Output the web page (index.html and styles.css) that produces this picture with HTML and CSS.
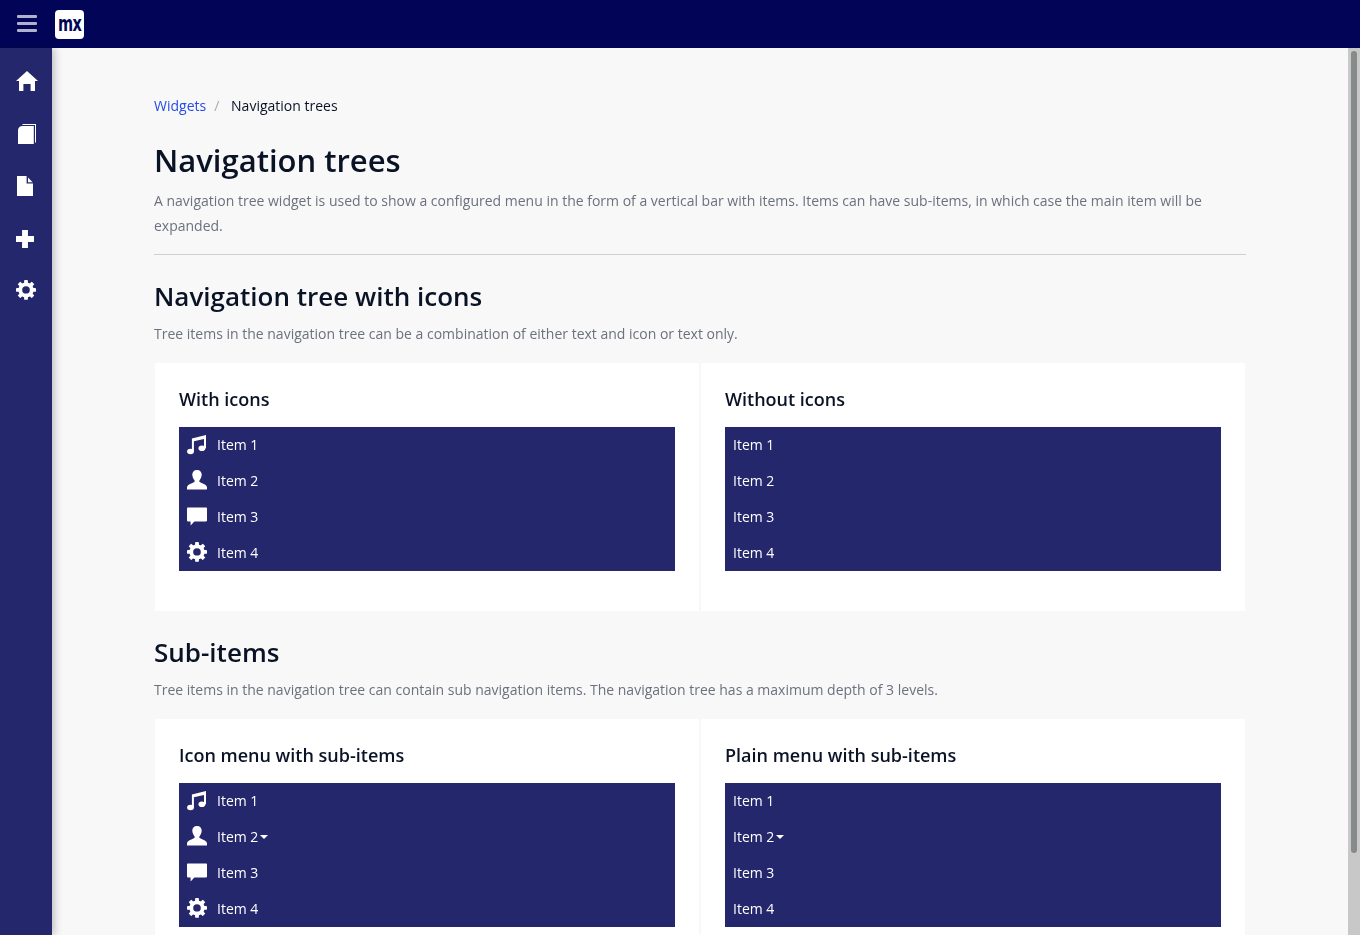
FILE: index.html
```html
<!DOCTYPE html>
<html lang="en">
<head>
    <meta charset="UTF-8">
    <title>Navigation trees</title>
    <link rel="stylesheet" href="styles.css">
</head>
<body>
    <svg class="defs" width="0" height="0">
        <symbol id="i-music" viewBox="0 0 20 20">
            <g transform="translate(0 -0.5)">
                <ellipse cx="3.5" cy="17" rx="3.4" ry="2.8"/>
                <ellipse cx="14.9" cy="13.8" rx="3.4" ry="2.8"/>
                <path d="M4.9 17 L4.9 4 L19 0.5 L19 13.8 L17 13.8 L17 4.4 L6.9 6.8 L6.9 17 Z"/>
            </g>
        </symbol>
        <symbol id="i-user" viewBox="0 0 20 20"><path d="M10 0 C13.2 0 14.8 2.1 14.7 4.8 C14.6 7 13.7 9 12.6 10.2 C12.1 10.8 12.2 11.6 12.8 12.1 C14.8 13.6 19.2 14.2 20 17.2 L20 19.6 L0 19.6 L0 17.2 C0.8 14.2 5.2 13.6 7.2 12.1 C7.8 11.6 7.9 10.8 7.4 10.2 C6.3 9 5.4 7 5.3 4.8 C5.2 2.1 6.8 0 10 0 Z"/></symbol>
        <symbol id="i-comment" viewBox="0 0 20 20"><path d="M0.8 0.6 L19.2 0.6 C19.7 0.6 20 0.9 20 1.4 L20 13.6 C20 14.1 19.7 14.4 19.2 14.4 L7.4 14.4 L3.6 18.6 L3.6 14.4 L0.8 14.4 C0.3 14.4 0 14.1 0 13.6 L0 1.4 C0 0.9 0.3 0.6 0.8 0.6 Z"/></symbol>
        <symbol id="i-cog" viewBox="0 0 20 20">
            <g transform="translate(0 -1.9) scale(1 0.98)">
                <circle cx="10" cy="11" r="5.7" fill="none" stroke="#fff" stroke-width="3.8"/>
                <rect x="8.1" y="1" width="3.8" height="4" rx="0.5"/>
                <rect x="8.1" y="1" width="3.8" height="4" rx="0.5" transform="rotate(45 10 11)"/>
                <rect x="8.1" y="1" width="3.8" height="4" rx="0.5" transform="rotate(90 10 11)"/>
                <rect x="8.1" y="1" width="3.8" height="4" rx="0.5" transform="rotate(135 10 11)"/>
                <rect x="8.1" y="1" width="3.8" height="4" rx="0.5" transform="rotate(180 10 11)"/>
                <rect x="8.1" y="1" width="3.8" height="4" rx="0.5" transform="rotate(225 10 11)"/>
                <rect x="8.1" y="1" width="3.8" height="4" rx="0.5" transform="rotate(270 10 11)"/>
                <rect x="8.1" y="1" width="3.8" height="4" rx="0.5" transform="rotate(315 10 11)"/>
            </g>
        </symbol>
    </svg>

    <div class="topbar">
        <div class="hamburger"><span></span><span></span><span></span></div>
        <div class="logo"><span>mx</span></div>
    </div>

    <div class="layout">
        <div class="sidebar">
            <svg class="side-icon" viewBox="0 0 22 20"><path d="M11 0 L22 10 L19 10 L19 20 L14.6 20 L14.6 13 L7.4 13 L7.4 20 L3 20 L3 10 L0 10 Z"/></svg>
            <svg class="side-icon side-book" viewBox="0 0 20 20"><path d="M6 0 L19 0 L19 18.4 L18 18.4 L18 1 L5 1 Z"/><path d="M5 2 L16.8 2 L16.8 20 L1 20 L1 6 C1 4 3 2 5 2 Z"/></svg>
            <svg class="side-icon side-file" viewBox="0 0 16 20"><path d="M0 0 L9.6 0 L9.6 7.6 L16 7.6 L16 20 L0 20 Z"/><path d="M11 1.6 L15.6 6.2 L11 6.2 Z"/></svg>
            <svg class="side-icon side-plus" viewBox="0 0 19 19"><path d="M6.4 0 L12.6 0 L12.6 6.4 L19 6.4 L19 12.6 L12.6 12.6 L12.6 19 L6.4 19 L6.4 12.6 L0 12.6 L0 6.4 L6.4 6.4 Z"/></svg>
            <svg class="side-icon side-cog"><use href="#i-cog"/></svg>
        </div>

        <div class="main">
            <div class="breadcrumb">
                <a href="#">Widgets</a>
                <span class="sep">/</span>
                <span>Navigation trees</span>
            </div>
            <h1>Navigation trees</h1>
            <p class="lead">A navigation tree widget is used to show a configured menu in the form of a vertical bar with items. Items can have sub-items, in which case the main item will be expanded.</p>
            <hr>

            <h2>Navigation tree with icons</h2>
            <p class="intro">Tree items in the navigation tree can be a combination of either text and icon or text only.</p>
            <div class="cards">
                <div class="card">
                    <h3>With icons</h3>
                    <ul class="tree">
                        <li><svg><use href="#i-music"/></svg>Item 1</li>
                        <li><svg><use href="#i-user"/></svg>Item 2</li>
                        <li><svg><use href="#i-comment"/></svg>Item 3</li>
                        <li><svg><use href="#i-cog"/></svg>Item 4</li>
                    </ul>
                </div>
                <div class="card">
                    <h3>Without icons</h3>
                    <ul class="tree">
                        <li>Item 1</li>
                        <li>Item 2</li>
                        <li>Item 3</li>
                        <li>Item 4</li>
                    </ul>
                </div>
            </div>

            <h2>Sub-items</h2>
            <p class="intro">Tree items in the navigation tree can contain sub navigation items. The navigation tree has a maximum depth of 3 levels.</p>
            <div class="cards">
                <div class="card">
                    <h3>Icon menu with sub-items</h3>
                    <ul class="tree">
                        <li><svg><use href="#i-music"/></svg>Item 1</li>
                        <li><svg><use href="#i-user"/></svg>Item 2<span class="caret"></span></li>
                        <li><svg><use href="#i-comment"/></svg>Item 3</li>
                        <li><svg><use href="#i-cog"/></svg>Item 4</li>
                    </ul>
                </div>
                <div class="card">
                    <h3>Plain menu with sub-items</h3>
                    <ul class="tree">
                        <li>Item 1</li>
                        <li>Item 2<span class="caret"></span></li>
                        <li>Item 3</li>
                        <li>Item 4</li>
                    </ul>
                </div>
            </div>
        </div>

        <div class="scrollbar"><div class="thumb"></div></div>
    </div>
</body>
</html>
```

FILE: styles.css
```css
* {
    box-sizing: border-box;
}
html, body {
    height: 100%;
}
body {
    margin: 0;
    overflow: hidden;
    display: flex;
    flex-direction: column;
    font-family: "Open Sans", sans-serif;
    font-size: 14px;
    color: #0a1326;
    background-color: #f8f8f8;
}
.defs {
    position: absolute;
}
symbol {
    overflow: visible;
}
.topbar {
    height: 48px;
    flex: none;
    display: flex;
    align-items: center;
    background-color: #020557;
}
.hamburger {
    width: 20px;
    margin-left: 17px;
    margin-bottom: 2px;
    display: flex;
    flex-direction: column;
    gap: 4px;
}
.hamburger span {
    height: 3px;
    border-radius: 1px;
    background-color: #b0b1cc;
}
.logo {
    width: 29px;
    height: 29px;
    margin-left: 18px;
    display: flex;
    align-items: center;
    justify-content: center;
    border-radius: 4px;
    background-color: #fff;
    color: #020557;
    font-family: "DejaVu Sans", sans-serif;
    font-size: 22px;
    font-weight: 700;
    letter-spacing: -1px;
}
.logo span {
    display: block;
    line-height: 24px;
    margin-top: 0;
    transform: scaleX(0.66);
}
.layout {
    flex: 1;
    min-height: 0;
    display: flex;
}
.sidebar {
    width: 52px;
    flex: none;
    position: relative;
    z-index: 1;
    padding-top: 23px;
    display: flex;
    flex-direction: column;
    align-items: flex-start;
    background-color: #24276c;
    box-shadow: 2px 0 8px rgba(0, 0, 0, 0.25);
}
.side-icon {
    width: 22px;
    height: 20px;
    margin-left: 16px;
    margin-bottom: 33px;
    fill: #fff;
    overflow: visible;
}
.side-book {
    margin-left: 17px;
    width: 20px;
    margin-bottom: 32px;
}
.side-file {
    width: 16px;
    margin-left: 17px;
    margin-bottom: 34px;
}
.side-plus {
    width: 18px;
    height: 18px;
}
.side-cog {
    width: 20px;
    margin-left: 15.5px;
}
.main {
    flex: 1;
    min-width: 0;
    overflow: hidden;
    padding: 48px 102px 0;
    will-change: transform; /* text comes out grey, not LCD */
}
.scrollbar {
    width: 12px;
    flex: none;
    padding: 3px 3px 0;
    background-color: #c8c8c8;
}
.thumb {
    height: 802px;
    border-radius: 3px;
    background-color: #868a8a;
}
.breadcrumb {
    line-height: 20px;
}
.breadcrumb a {
    color: #264ae5;
    text-decoration: none;
}
.breadcrumb .sep {
    color: #a9acb3;
    margin: 0 8px 0 4.5px;
}
h1 {
    margin: 24px 0 0;
    font-size: 31px;
    font-weight: 600;
    line-height: 40px;
}
.lead, .intro {
    margin: 0;
    color: #6c717e;
    line-height: 25px;
}
.lead {
    margin-top: 8px;
}
hr {
    height: 1px;
    margin: 16px 0 0;
    border: 0;
    background-color: #ced0d3;
}
h2 {
    margin: 23px 0 0;
    font-size: 26px;
    font-weight: 600;
    line-height: 36px;
}
.intro {
    margin-top: 7px;
}
.cards {
    display: grid;
    grid-template-columns: 1fr 1fr;
    margin-top: 16px;
    margin-bottom: -1px;
}
.card {
    padding: 24px;
    margin: 1px;
    height: 248px;
    background-color: #fff;
}
h3 {
    margin: 0 0 16px;
    font-size: 18px;
    font-weight: 600;
    line-height: 24px;
}
.tree {
    margin: 0;
    padding: 0;
    list-style: none;
    background-color: #24276c;
}
.tree li {
    height: 36px;
    padding-left: 8px;
    display: flex;
    align-items: center;
    color: #fff;
    line-height: 20px;
}
.tree li svg {
    width: 20px;
    height: 20px;
    margin-right: 10px;
    fill: #fff;
    overflow: visible;
}
.tree li:nth-child(2) svg {
    margin-top: -2px;
}
.caret {
    width: 0;
    height: 0;
    margin-left: 2px;
    border-top: 4px solid #fff;
    border-left: 4px solid transparent;
    border-right: 4px solid transparent;
}
```
